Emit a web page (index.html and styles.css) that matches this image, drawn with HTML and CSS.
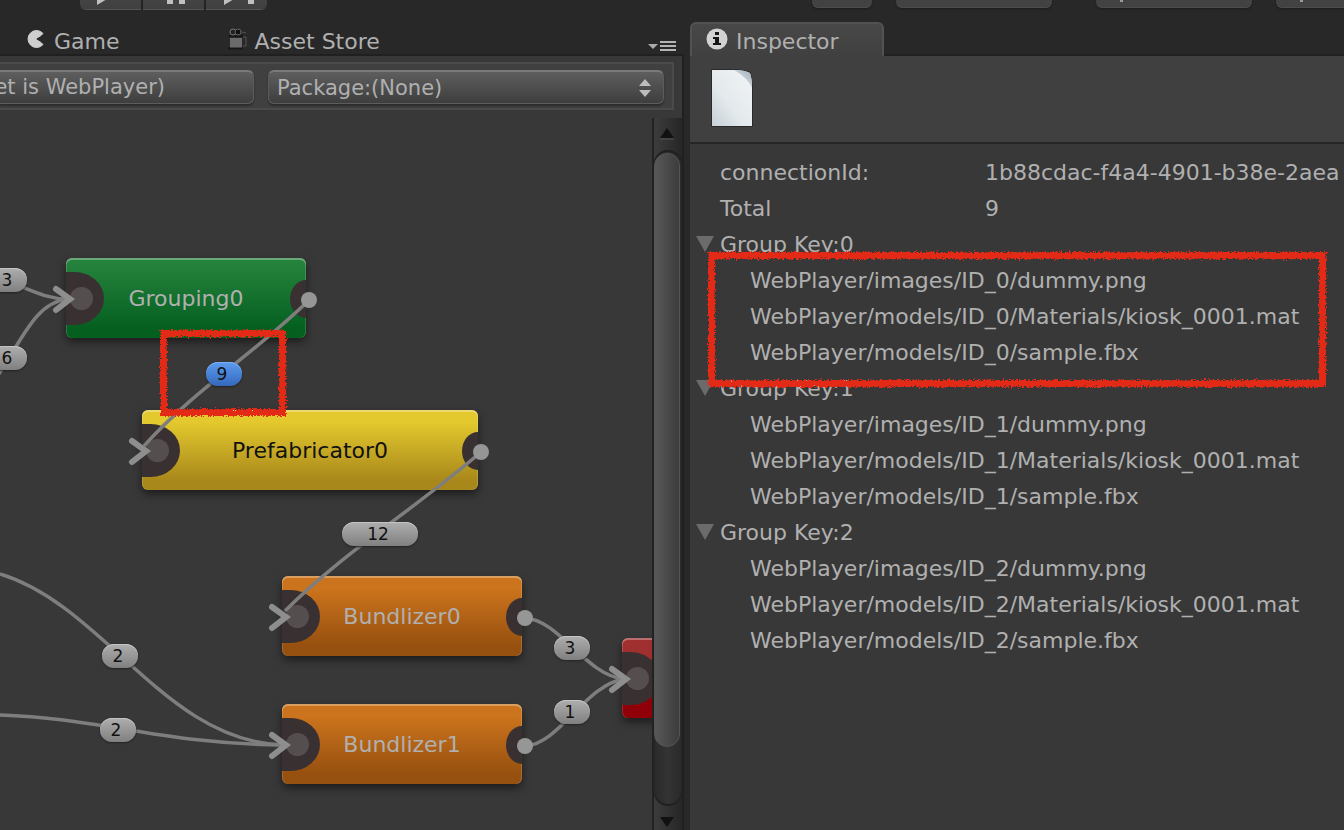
FILE: index.html
```html
<!DOCTYPE html>
<html lang="en">
<head>
<meta charset="utf-8">
<title>Asset Graph</title>
<link rel="stylesheet" href="styles.css">
</head>
<body>
<svg class="defs" width="0" height="0" aria-hidden="true">
  <filter id="chalk" x="-5%" y="-10%" width="110%" height="120%">
    <feTurbulence type="fractalNoise" baseFrequency="0.6" numOctaves="2" seed="4" result="noise"/>
    <feDisplacementMap in="SourceGraphic" in2="noise" scale="6" xChannelSelector="R" yChannelSelector="G"/>
  </filter>
</svg>

<header class="topbar">
  <div class="playback">
    <button class="play-button" aria-label="Play"><svg width="60" height="28" viewBox="0 -18 60 28"><path d="M16-15V5L32-4.500z"/></svg></button>
    <button class="play-button" aria-label="Pause"><svg width="60" height="28" viewBox="0 -18 60 28"><path d="M23-13h6V4h-6zM35-13h6V4h-6z"/></svg></button>
    <button class="play-button" aria-label="Step"><svg width="60" height="28" viewBox="0 -18 60 28"><path d="M17-15V5L33-4.500zM41-13h6V4h-6z"/></svg></button>
  </div>
  <div class="top-actions">
    <button class="top-button small" aria-label="Cloud"></button>
    <button class="top-button" aria-label="Account"></button>
    <button class="top-button spaced tick" aria-label="Layers"></button>
    <button class="top-button tick" aria-label="Layout"></button>
  </div>
</header>

<main class="workspace">
  <section class="panel graph-panel">
    <nav class="tabs">
      <button class="tab game-tab">
        <svg width="20" height="20" viewBox="0 0 20 20"><path d="M17 4.500A8.500 8.500 0 1 0 17 15.500L15 13.500 10 10.500V9.500L15 6.500z" fill="#cfcfcf" stroke="#cfcfcf" stroke-linejoin="round"/></svg>
        Game
      </button>
      <button class="tab store-tab">
        <svg width="20" height="22" viewBox="0 0 20 22"><path d="M3 10h12v10H3z" fill="#6b6b6b"/><path d="M1 20.500h15M2 8h14" stroke="#171717" stroke-width="2"/><circle cx="6" cy="4" r="3" fill="#222" stroke="#777"/><circle cx="11" cy="4" r="3" fill="#111" stroke="#666"/><path d="M15 4l4 1M16 9h3v9h-3" fill="none" stroke="#555"/></svg>
        Asset Store
      </button>
      <button class="panel-menu" aria-label="Panel menu">
        <svg width="28" height="12" viewBox="0 0 28 12"><path d="M0 3h10L5 8z" fill="#aaa"/><path d="M12 1h16M12 5h16M12 9h16" stroke="#b4b4b4" stroke-width="2"/></svg>
      </button>
    </nav>
    <div class="panel-body">
      <div class="toolbar">
        <button class="field target">et is WebPlayer)</button>
        <div class="field-wrap">
          <select class="field package" aria-label="Package"><option>Package:(None)</option></select>
          <svg class="updown" width="12" height="18" viewBox="0 0 12 18"><path d="M0 7L6 0l6 7zM0 11l6 7 6-7z" fill="#bcbcbc"/></svg>
        </div>
      </div>
      <div class="graph">
        <div class="canvas">
          <div class="node green" style="left:66px;top:148px;width:240px"><i class="port-in"></i>Grouping0<i class="port-out"></i></div>
          <div class="node yellow" style="left:142px;top:300px;width:336px"><i class="port-in"></i>Prefabricator0<i class="port-out"></i></div>
          <div class="node orange" style="left:282px;top:466px;width:240px"><i class="port-in"></i>Bundlizer0<i class="port-out"></i></div>
          <div class="node orange" style="left:282px;top:594px;width:240px"><i class="port-in"></i>Bundlizer1<i class="port-out"></i></div>
          <div class="node red" style="left:622px;top:528px;width:240px"><i class="port-in"></i></div>

          <svg class="wires" width="652" height="720" viewBox="0 110 652 720">
            <g class="wire">
              <path d="M-10 277C20 282 38 299 68 299"/>
              <path d="M-4 378C20 345 34 302 68 299"/>
              <path d="M309 300C259 350 194 390 144 446"/>
              <path d="M481 452C420 505 340 555 285 611"/>
              <path d="M525 618C560 620 585 675 624 679"/>
              <path d="M525 746C560 744 585 685 624 679"/>
              <path d="M0 574C105 606 165 742 284 745"/>
              <path d="M0 715C100 718 160 744 284 745"/>
            </g>
            <g class="arrow">
              <path d="M56 289l14 10-14 11"/>
              <path d="M132 441l14 10-14 11"/>
              <path d="M272 607l14 10-14 11"/>
              <path d="M272 735l14 10-14 11"/>
              <path d="M612 669l14 10-14 11"/>
            </g>
            <g class="dot">
              <circle cx="309" cy="300" r="8"/>
              <circle cx="481" cy="452" r="8"/>
              <circle cx="525" cy="618" r="8"/>
              <circle cx="525" cy="746" r="8"/>
            </g>
          </svg>

          <span class="badge" style="left:-9px;top:158px">3</span>
          <span class="badge" style="left:-9px;top:236px">6</span>
          <span class="badge selected" style="left:206px;top:252px">9</span>
          <span class="badge wide" style="left:342px;top:412px">12</span>
          <span class="badge" style="left:554px;top:526px">3</span>
          <span class="badge" style="left:554px;top:590px">1</span>
          <span class="badge" style="left:102px;top:534px">2</span>
          <span class="badge" style="left:100px;top:608px">2</span>
          <div class="mark wire-mark"></div>
        </div>
        <div class="scrollbar">
          <button class="scroll-button" aria-label="Scroll up"><svg width="14" height="12" viewBox="0 0 14 12"><path d="M0 10L7 0l7 10z" fill="#111"/><path d="M0 11h14" stroke="#555"/></svg></button>
          <div class="track"><div class="thumb"></div></div>
          <button class="scroll-button down" aria-label="Scroll down"><svg width="14" height="10" viewBox="0 0 14 10"><path d="M0 0h14L7 10z" fill="#111"/></svg></button>
        </div>
      </div>
    </div>
  </section>

  <section class="panel inspector">
    <nav class="tabs">
      <button class="tab active">
        <svg width="22" height="22" viewBox="0 0 22 22"><circle cx="11" cy="11" r="10.500" fill="#d2d2d2"/><path d="M9 4h4v3H9zM7 9h6v6h2v2H7v-2h2v-4H7z" fill="#151515"/></svg>
        Inspector
      </button>
    </nav>
    <div class="asset-header">
      <svg width="44" height="60" viewBox="0 0 44 60">
        <defs>
          <linearGradient id="page" x1="1" y1="0" x2="0" y2="1"><stop offset="0" stop-color="#f1f4f6"/><stop offset=".6" stop-color="#e3e9ec"/><stop offset="1" stop-color="#c6d0d7"/></linearGradient>
          <linearGradient id="fold" x1="1" y1="0" x2="0" y2="1"><stop offset="0" stop-color="#a3b1bb"/><stop offset="1" stop-color="#e9eef1"/></linearGradient>
        </defs>
        <path d="M1 1h26l14 3 2 15v40H1z" fill="#2a2a2a"/>
        <path d="M2 2h22q10 0 16 3 2 6 2 15v38H2z" fill="url(#page)"/>
        <path d="M24 2q10 0 16 3 2 6 2 15Q38 10 24 2z" fill="url(#fold)"/>
      </svg>
    </div>
    <div class="details">
      <div class="row"><span class="key">connectionId:</span><span>1b88cdac-f4a4-4901-b38e-2aea</span></div>
      <div class="row"><span class="key">Total</span><span>9</span></div>
      <details class="group" open>
        <summary class="row"><svg class="fold" width="18" height="16" viewBox="0 0 18 16"><path d="M0 0h18L9 16z"/></svg>Group Key:0</summary>
        <div class="item">WebPlayer/images/ID_0/dummy.png</div>
        <div class="item">WebPlayer/models/ID_0/Materials/kiosk_0001.mat</div>
        <div class="item">WebPlayer/models/ID_0/sample.fbx</div>
      </details>
      <details class="group" open>
        <summary class="row"><svg class="fold" width="18" height="16" viewBox="0 0 18 16"><path d="M0 0h18L9 16z"/></svg>Group Key:1</summary>
        <div class="item">WebPlayer/images/ID_1/dummy.png</div>
        <div class="item">WebPlayer/models/ID_1/Materials/kiosk_0001.mat</div>
        <div class="item">WebPlayer/models/ID_1/sample.fbx</div>
      </details>
      <details class="group" open>
        <summary class="row"><svg class="fold" width="18" height="16" viewBox="0 0 18 16"><path d="M0 0h18L9 16z"/></svg>Group Key:2</summary>
        <div class="item">WebPlayer/images/ID_2/dummy.png</div>
        <div class="item">WebPlayer/models/ID_2/Materials/kiosk_0001.mat</div>
        <div class="item">WebPlayer/models/ID_2/sample.fbx</div>
      </details>
      <div class="mark group-mark"></div>
    </div>
  </section>
</main>
</body>
</html>
```
FILE: styles.css
```css
* { box-sizing: border-box; }

body {
  margin: 0;
  height: 100vh;
  display: flex;
  flex-direction: column;
  overflow: hidden;
  background: #282828;
  color: #b0b0b0;
  font: 22px/36px "DejaVu Sans", sans-serif;
}

button, select { font: inherit; color: inherit; border: 0; padding: 0; margin: 0; }
.defs { position: absolute; }

/* Top bar */
.topbar {
  flex: none;
  height: 22px;
  padding-left: 80px;
  display: flex;
  align-items: flex-start;
  justify-content: space-between;
  overflow: hidden;
}
.playback { display: flex; gap: 2px; margin-top: -18px; height: 28px; border-radius: 6px; overflow: hidden; background: #242424; flex: none; }
.play-button { width: 61px; height: 28px; background: linear-gradient(#4a4a4a, #404040); border-bottom: 1px solid #555; display: flex; justify-content: center; }
.play-button svg { fill: #c0c0c0; }
.top-actions { display: flex; gap: 24px; margin: -20px -88px 0 0; flex: none; }
.top-button { width: 156px; height: 28px; border-radius: 6px; background: #424242; border-bottom: 1px solid #4c4c4c; box-shadow: 0 1px 2px #1c1c1c; }
.top-button.small { width: 60px; }
.top-button.spaced { margin-left: 20px; }
.tick::after { content: ""; display: block; width: 3px; height: 2px; margin: 14px 0 0 24px; background: #999; }

/* Panels */
.workspace { flex: 1; min-height: 0; display: grid; grid-template-columns: 684fr 654fr; gap: 6px; }
.panel { min-width: 0; min-height: 0; display: flex; flex-direction: column; }
.tabs { flex: none; height: 34px; display: flex; align-items: center; box-shadow: inset 0 -2px #202020; }
.tab { display: flex; align-items: center; gap: 8px; height: 34px; background: none; padding-top: 6px; }
.tab svg { flex: none; margin-bottom: 6px; }
.game-tab { padding-left: 26px; }
.store-tab { padding-left: 107px; }
.panel-menu { margin: 16px 8px 0 auto; background: none; display: flex; }
.tab.active {
  width: 194px;
  padding-left: 14px;
  border: 2px solid #525252;
  border-bottom: 0;
  border-radius: 6px 6px 0 0;
  background: linear-gradient(#484848, #404040);
  padding-top: 4px;
}

.panel-body { flex: 1; min-height: 0; display: flex; flex-direction: column; padding-top: 6px; background: #383838; border-right: 2px solid #202020; }
.toolbar {
  flex: none;
  height: 48px;
  margin-right: 8px;
  padding: 6px 8px 6px 0;
  display: grid;
  grid-template-columns: 254fr 396fr;
  gap: 14px;
  border: 2px solid #4a4a4a;
  border-left: 0;
  background: #404040;
}
.field {
  height: 34px;
  border: 1px solid #5c5c5c;
  border-top: 2px solid #7a7a7a;
  border-radius: 6px;
  background: linear-gradient(#5e5e5e, #3e3e3e);
  box-shadow: 0 2px 2px #2c2c2c;
  font-size: 21px;
  line-height: 30px;
}
.target {
  min-width: 0;
  border-left: 0;
  border-radius: 0 6px 6px 0;
  padding-right: 88px;
  display: flex;
  justify-content: flex-end;
  white-space: nowrap;
  overflow: hidden;
}
.field-wrap { position: relative; display: flex; }
.package { width: 100%; appearance: none; padding-left: 8px; }
.updown { position: absolute; right: 13px; top: 9px; pointer-events: none; }

/* Graph */
.graph { flex: 1; min-height: 0; display: flex; }
.canvas { flex: 1; position: relative; overflow: hidden; }
.wires { position: absolute; left: 0; top: 0; }
.wire { fill: none; stroke: #7e7e7e; stroke-width: 3.5; }
.arrow { fill: none; stroke: #8e8e8e; stroke-width: 6; stroke-linecap: round; }
.dot { fill: #969696; }

.node {
  position: absolute;
  height: 80px;
  line-height: 82px;
  text-align: center;
  border-radius: 6px;
  overflow: hidden;
  box-shadow: inset 0 2px rgba(255, 255, 255, .3), inset 1px 0 rgba(255, 255, 255, .15), inset -1px 0 rgba(255, 255, 255, .15), 0 4px 8px rgba(0, 0, 0, .5);
}
.green { background: linear-gradient(#28853e, #056020 88%); }
.yellow { background: linear-gradient(#e3c92e 15%, #a9881b 88%); color: #111; }
.orange { background: linear-gradient(#cc741d 15%, #96500f 88%); }
.red { background: linear-gradient(#a03030 25%, #900008 75%); }
.port-in, .port-out { position: absolute; background: #393131; }
.port-in { left: 0; top: 14px; width: 38px; height: 53px; border-radius: 0 30px 30px 0 / 0 27px 27px 0; }
.port-in::after { content: ""; position: absolute; left: 4px; top: 15px; width: 23px; height: 23px; border-radius: 50%; background: #544f4e; }
.port-out { right: 0; top: 22px; width: 16px; height: 38px; border-radius: 16px 0 0 16px / 19px 0 0 19px; }

.badge {
  position: absolute;
  width: 36px;
  height: 24px;
  padding-right: 4px;
  border-radius: 12px;
  background: linear-gradient(#aeaeae, #808080);
  box-shadow: inset 0 1px #c4c4c4, 0 1px 2px #222;
  color: #111;
  font-size: 17px;
  line-height: 24px;
  text-align: center;
}
.wide { width: 76px; }
.selected { background: linear-gradient(#5c9cf0, #3468bc); box-shadow: inset 0 1px #7cb0f4, 0 1px 2px #222; }

.mark { position: absolute; border: 7px solid #e22a18; filter: url(#chalk); pointer-events: none; }
.wire-mark { left: 160px; top: 220px; width: 126px; height: 86px; }
.group-mark { left: 18px; right: 18px; top: 108px; height: 135px; }

/* Scrollbar */
.scrollbar { flex: none; width: 30px; margin-top: 8px; display: flex; flex-direction: column; border-left: 2px solid #222; background: linear-gradient(90deg, #3c3c3c, #262626); }
.scroll-button { flex: none; height: 32px; padding-right: 2px; background: none; display: flex; align-items: center; justify-content: center; }
.scroll-button.down { height: 24px; padding-top: 8px; }
.track { flex: 1; padding: 3px 2px 0 0; border-radius: 14px; background: linear-gradient(90deg, #2a2a2a, #333 50%, #2a2a2a); box-shadow: inset 0 2px 1px #202020, inset 0 -2px 1px #202020; }
.thumb { height: 91%; border: 1px solid #555; border-radius: 13px; background: linear-gradient(90deg, #585858, #3c3c3c); }

/* Inspector */
.inspector { background: linear-gradient(#282828 34px, #383838 34px); }
.asset-header { flex: none; height: 88px; padding: 12px 20px; background: #404040; border-bottom: 2px solid #262626; }
.asset-header svg { display: block; }
.details { position: relative; padding: 11px 0 0 30px; white-space: nowrap; overflow: hidden; }
.row { display: flex; height: 36px; }
.key { width: 265px; flex: none; }
summary { list-style: none; }
.fold { flex: none; fill: #6b6b6b; margin: 9px 6px 0 -24px; }
.item { height: 36px; padding-left: 30px; }
```
